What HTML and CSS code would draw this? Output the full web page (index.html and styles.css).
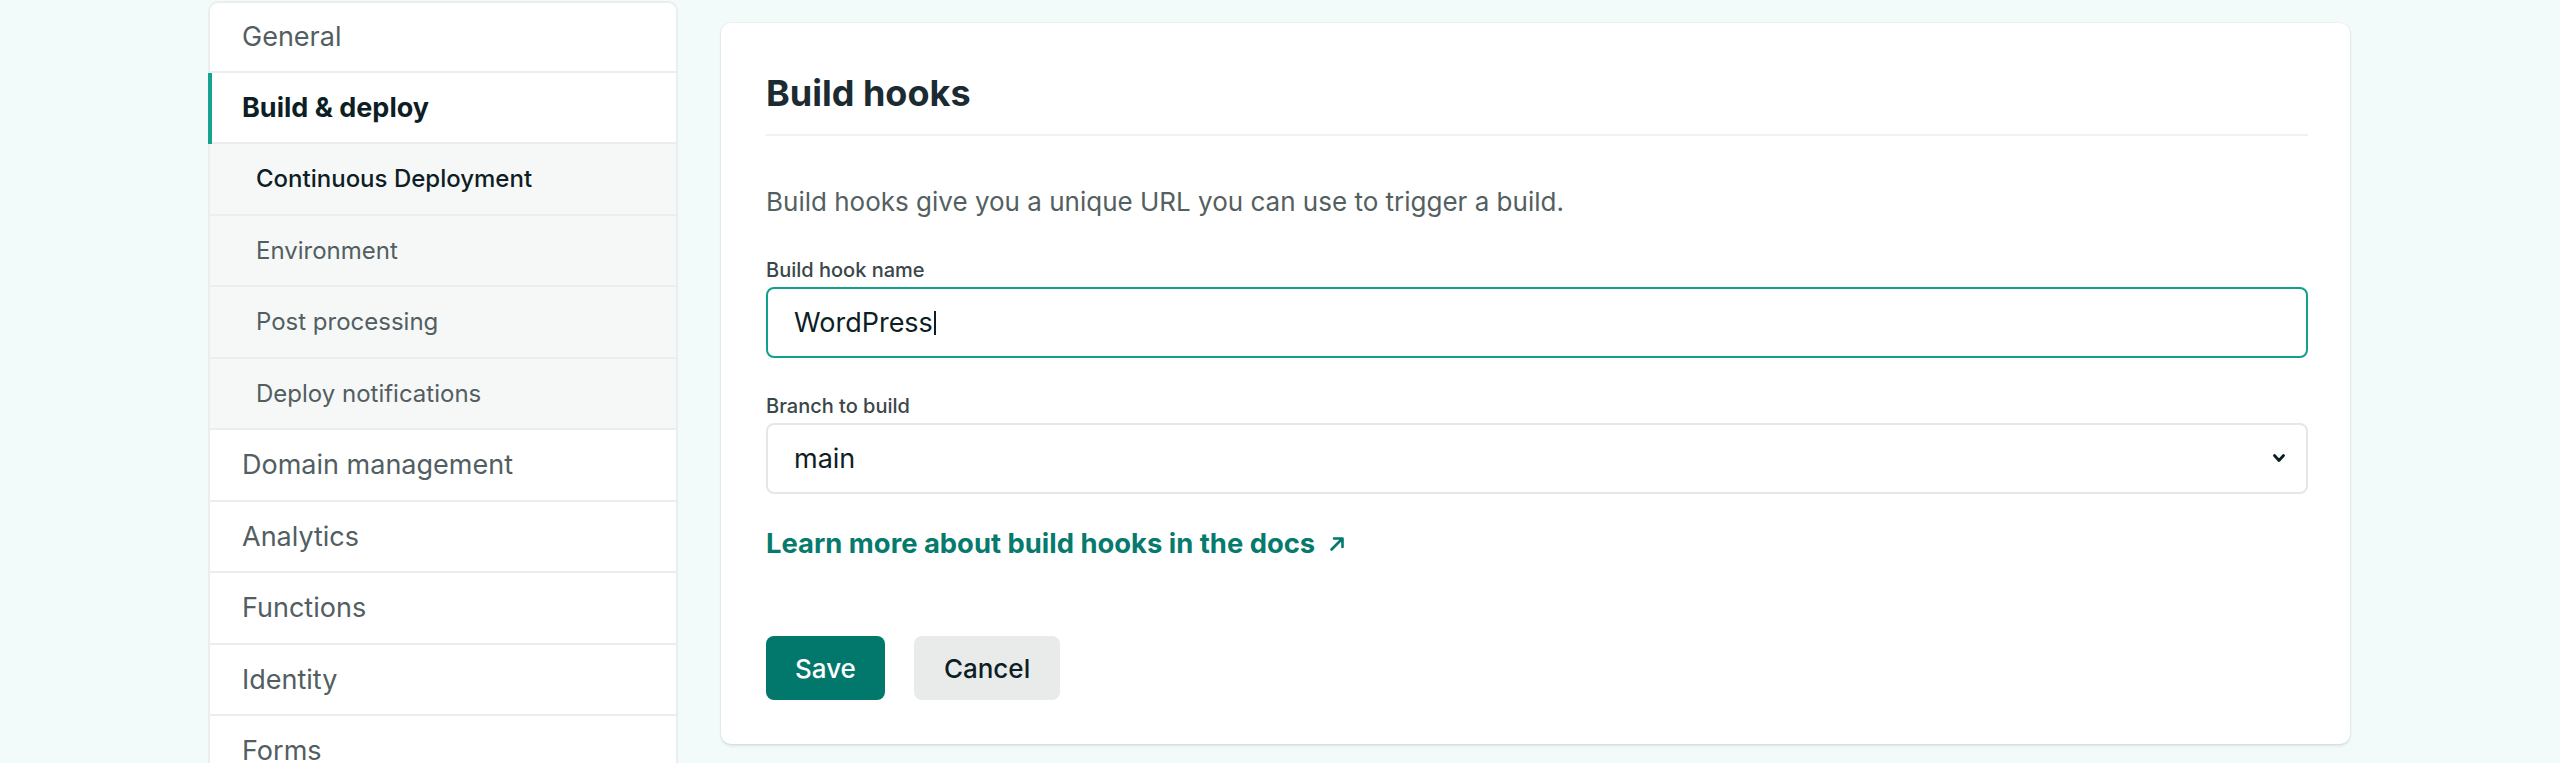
FILE: index.html
```html
<!DOCTYPE html>
<html lang="en">
<head>
  <meta charset="UTF-8" />
  <meta name="viewport" content="width=device-width, initial-scale=1.0" />
  <title>Build &amp; deploy settings</title>
  <link rel="stylesheet" href="styles.css">
</head>
<body>
  <div class="page">
    <!-- Settings navigation -->
    <ul class="sidebar">
      <li class="nav-item">General</li>
      <li class="nav-item active">Build &amp; deploy</li>
      <li class="nav-item sub current">Continuous Deployment</li>
      <li class="nav-item sub">Environment</li>
      <li class="nav-item sub">Post processing</li>
      <li class="nav-item sub">Deploy notifications</li>
      <li class="nav-item">Domain management</li>
      <li class="nav-item">Analytics</li>
      <li class="nav-item">Functions</li>
      <li class="nav-item">Identity</li>
      <li class="nav-item">Forms</li>
    </ul>

    <!-- Build hooks form -->
    <section class="card">
      <h2 class="card-title">Build hooks</h2>
      <p class="intro">Build hooks give you a unique URL you can use to trigger a build.</p>

      <label class="field-label">Build hook name</label>
      <div class="text-field focused">
        <span>WordPress</span><span class="caret"></span>
      </div>

      <label class="field-label second">Branch to build</label>
      <div class="select-wrap">
        <select class="select-field">
          <option>main</option>
        </select>
        <svg class="chevron" width="12" height="9" viewBox="0 0 12 9">
          <path d="M1.5 1.5 L6 6.5 L10.5 1.5" fill="none" stroke="#0e1e25" stroke-width="2.8" stroke-linecap="round" stroke-linejoin="round"/>
        </svg>
      </div>

      <a class="docs-link" href="#">Learn more about build hooks in the docs
        <svg class="ext-arrow" width="16" height="16" viewBox="0 0 16 16">
          <path d="M2.5 13.5 L13 3 M5 2.5 H13.5 V11" fill="none" stroke="#017a6b" stroke-width="2.6" stroke-linecap="round" stroke-linejoin="round"/>
        </svg>
      </a>

      <div class="actions">
        <button class="btn btn-primary">Save</button>
        <button class="btn btn-secondary">Cancel</button>
      </div>
    </section>
  </div>
</body>
</html>
```

FILE: styles.css
```css
/* Basic Reset */
* {
  margin: 0;
  padding: 0;
  box-sizing: border-box;
}

html {
  overflow: hidden;
}

body {
  font-family: Inter, "Noto Sans", sans-serif;
  background-color: #f3fafa;
  color: #0e1e25;
}

.page {
  display: flex;
  align-items: flex-start;
  gap: 43px;
  padding: 1px 0 0 208px;
}

/* Sidebar */
.sidebar {
  width: 470px;
  flex-shrink: 0;
  list-style: none;
  background-color: #ffffff;
  border: 2px solid #eaeeee;
  border-bottom: none;
  border-radius: 10px 10px 0 0;
}

.nav-item {
  position: relative;
  display: flex;
  align-items: center;
  height: 71.5px;
  padding-left: 32px;
  border-bottom: 2px solid #eaeeee;
  font-size: 27px;
  color: #525e61;
}

.nav-item:first-child {
  height: 69.5px;
  border-radius: 8px 8px 0 0;
}

.nav-item.active {
  font-weight: 700;
  color: #0e1e25;
}

.nav-item.active::before {
  content: "";
  position: absolute;
  left: -2px;
  top: 0;
  bottom: -2px;
  width: 4px;
  background-color: #15a28e;
}

.nav-item.sub {
  padding-left: 46px;
  font-size: 24px;
  background-color: #f6f8f8;
}

.nav-item.current {
  font-weight: 500;
  color: #0e1e25;
}

/* Card */
.card {
  width: 1629px;
  margin-top: 22px;
  padding: 48px 42px 44px 45px;
  background-color: #ffffff;
  border-radius: 10px;
  box-shadow: 0 2px 3px rgba(14, 30, 37, 0.1), 0 0 0 1px rgba(14, 30, 37, 0.03);
}

.card-title {
  font-size: 36px;
  line-height: 44px;
  font-weight: 700;
  color: #1c2b31;
  padding-bottom: 19px;
  border-bottom: 2px solid #eff2f2;
}

.intro {
  margin-top: 50px;
  font-size: 26px;
  line-height: 32px;
  color: #545f62;
}

.field-label {
  display: block;
  margin-top: 39px;
  margin-bottom: 4px;
  font-size: 20px;
  line-height: 26px;
  font-weight: 500;
  color: #3b4649;
}

.field-label.second {
  margin-top: 35px;
}

.text-field {
  display: flex;
  align-items: center;
  height: 71px;
  padding-left: 26px;
  border: 2px solid #e4e7e7;
  border-radius: 8px;
  font-size: 27px;
  color: #0e1e25;
}

.text-field.focused {
  border: 2.5px solid #10a08d;
}

.caret {
  width: 2px;
  height: 24px;
  margin-left: 1px;
  background-color: #0e1e25;
}

.select-wrap {
  position: relative;
}

.select-field {
  display: block;
  width: 100%;
  height: 71px;
  padding-left: 26px;
  border: 2px solid #e4e7e7;
  border-radius: 8px;
  background-color: #ffffff;
  font-family: inherit;
  font-size: 27px;
  color: #0e1e25;
  appearance: none;
  -webkit-appearance: none;
  outline: none;
}

.chevron {
  position: absolute;
  right: 23px;
  top: 31px;
}

.docs-link {
  display: inline-flex;
  align-items: center;
  gap: 14px;
  margin-top: 33px;
  font-size: 27.4px;
  line-height: 32px;
  font-weight: 700;
  color: #067a6c;
  text-decoration: none;
}

.ext-arrow {
  margin-top: 2px;
}

/* Buttons */
.actions {
  display: flex;
  gap: 29px;
  margin-top: 77px;
}

.btn {
  height: 64px;
  padding: 0 29px;
  border: none;
  border-radius: 8px;
  font-family: inherit;
  font-size: 26px;
  font-weight: 500;
}

.btn-primary {
  background-color: #01786b;
  color: #ffffff;
}

.btn-secondary {
  padding: 0 30px;
  background-color: #e9ebeb;
  color: #0e1e25;
}
```
